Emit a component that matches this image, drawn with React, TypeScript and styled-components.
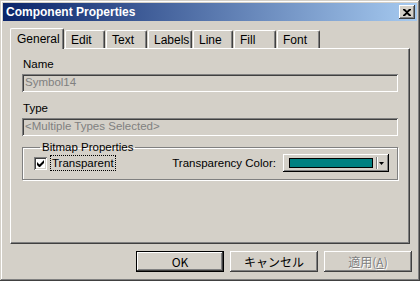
import React from 'react'
import styled, { createGlobalStyle } from 'styled-components'

const FACE = '#d4d0c8'
const SHADOW = '#808080'
const DARK = '#404040'

const GlobalStyle = createGlobalStyle`
    html, body {
        margin: 0;
        padding: 0;
        background: ${FACE};
    }
    body {
        font-family: "Liberation Sans", Arial, "Noto Sans CJK JP", sans-serif;
        font-size: 11.5px;
        color: #000;
    }
`

const Window = styled.div`
    box-sizing: border-box;
    width: 420px;
    height: 281px;
    padding: 3px;
    background: ${FACE};
    display: flex;
    flex-direction: column;
    box-shadow: inset -1px -1px ${DARK}, inset 1px 1px ${FACE},
        inset -2px -2px ${SHADOW}, inset 2px 2px #fff;
`

const TitleBar = styled.div`
    height: 18px;
    display: flex;
    align-items: center;
    justify-content: space-between;
    padding: 0 2px 0 3px;
    background: linear-gradient(to right, #0a246a, #a6caf0);
    color: #fff;
    font-weight: bold;
    font-size: 12px;
`

const CloseButton = styled.div`
    box-sizing: border-box;
    width: 16px;
    height: 14px;
    background: ${FACE};
    display: flex;
    align-items: center;
    justify-content: center;
    box-shadow: inset -1px -1px ${DARK}, inset 1px 1px #fff,
        inset -2px -2px ${SHADOW};
`

const Body = styled.div`
    flex: 1;
    display: flex;
    flex-direction: column;
    padding: 7px 7px 0 7px;
`

const TabRow = styled.div`
    display: flex;
    align-items: flex-end;
    height: 20px;
    position: relative;
    z-index: 1;
`

const Tab = styled.div<{ $active?: boolean; $w: number }>`
    box-sizing: border-box;
    width: ${p => p.$w}px;
    height: ${p => (p.$active ? 21 : 18)}px;
    margin-bottom: ${p => (p.$active ? -1 : 0)}px;
    margin-right: 1px;
    padding-left: ${p => (p.$active ? 6 : 5)}px;
    padding-top: ${p => (p.$active ? 3 : 2)}px;
    background: ${FACE};
    border-top: 1px solid #fff;
    border-left: 1px solid #fff;
    border-right: 1px solid ${DARK};
    border-top-left-radius: 2px;
    border-top-right-radius: 2px;
    box-shadow: inset -1px 0 ${SHADOW};
    font-size: 12px;
`

const Panel = styled.div`
    box-sizing: border-box;
    height: 196px;
    padding: 8px 11px 0 11px;
    display: flex;
    flex-direction: column;
    background: ${FACE};
    border-top: 1px solid #fff;
    border-left: 1px solid #fff;
    border-right: 1px solid ${DARK};
    border-bottom: 1px solid ${DARK};
    box-shadow: inset -1px -1px ${SHADOW};
`

const Label = styled.div`
    height: 14px;
    line-height: 14px;
    padding-left: 1px;
    margin-bottom: 3px;
`

const Field = styled.div`
    box-sizing: border-box;
    height: 18px;
    margin-bottom: 9px;
    padding: 2px 0 0 3px;
    color: ${SHADOW};
    background: ${FACE};
    box-shadow: inset 1px 1px ${SHADOW}, inset -1px -1px #fff,
        inset 2px 2px ${DARK}, inset -2px -2px ${FACE};
`

const Group = styled.fieldset`
    box-sizing: border-box;
    margin: -4px 0 0 0;
    padding: 0 8px 7px 11px;
    border: 1px solid ${SHADOW};
    box-shadow: 1px 1px #fff, inset 1px 1px #fff;
    legend {
        padding: 0 2px;
        margin-left: 6px;
        line-height: 12px;
    }
`

const GroupRow = styled.div`
    display: flex;
    align-items: center;
    height: 18px;
    margin-top: 1px;
`

const CheckBox = styled.div`
    box-sizing: border-box;
    width: 13px;
    height: 13px;
    background: #fff;
    display: flex;
    align-items: center;
    justify-content: center;
    box-shadow: inset 1px 1px ${SHADOW}, inset -1px -1px #fff,
        inset 2px 2px ${DARK}, inset -2px -2px ${FACE};
`

const FocusLabel = styled.span`
    margin-left: 4px;
    padding: 0 1px;
    outline: 1px dotted #000;
    line-height: 14px;
`

const ColorLabel = styled.span`
    margin-left: auto;
    margin-right: 7px;
`

const ColorPicker = styled.div`
    box-sizing: border-box;
    width: 106px;
    height: 18px;
    display: flex;
    align-items: center;
    padding: 0 3px 0 6px;
    background: ${FACE};
    box-shadow: inset -1px -1px #000, inset 1px 1px #fff,
        inset -2px -2px ${SHADOW};
`

const Swatch = styled.div`
    box-sizing: border-box;
    width: 84px;
    height: 10px;
    background: #008080;
    border: 1px solid #000;
`

const DropArrow = styled.div`
    margin-left: 3px;
    height: 12px;
    flex: 1;
    display: flex;
    align-items: center;
    justify-content: center;
    border-left: 1px solid ${SHADOW};
    box-shadow: inset 1px 0 #fff;
`

const ButtonRow = styled.div`
    display: flex;
    justify-content: flex-end;
    gap: 6px;
    margin-top: 7px;
    margin-right: -2px;
`

const Button = styled.div<{ $disabled?: boolean; $default?: boolean }>`
    box-sizing: border-box;
    width: 88px;
    height: 21px;
    display: flex;
    align-items: center;
    justify-content: center;
    background: ${FACE};
    color: ${p => (p.$disabled ? SHADOW : '#000')};
    text-shadow: ${p => (p.$disabled ? '1px 1px #fff' : 'none')};
    box-shadow: ${p =>
        p.$default
            ? `inset -1px -1px #000, inset 1px 1px #000, inset -2px -2px ${DARK}, inset 2px 2px #fff, inset -3px -3px ${SHADOW}`
            : `inset -1px -1px ${DARK}, inset 1px 1px #fff, inset -2px -2px ${SHADOW}`};
    font-family: "Noto Sans CJK JP", "Liberation Sans", sans-serif;
    font-size: 12px;
    u {
        text-decoration: underline;
    }
`

const tabs: [string, number][] = [
    ['General', 54],
    ['Edit', 40],
    ['Text', 41],
    ['Labels', 44],
    ['Line', 40],
    ['Fill', 42],
    ['Font', 43],
]

export default function App() {
    return (
        <>
            <GlobalStyle />
            <Window>
                <TitleBar>
                    <span>Component Properties</span>
                    <CloseButton>
                        <svg width="8" height="7" viewBox="0 0 8 7">
                            <path d="M0 0h2l2 2 2-2h2v1L5 3.5 8 6v1H6L4 5 2 7H0V6l3-2.5L0 1z" fill="#000" />
                        </svg>
                    </CloseButton>
                </TitleBar>
                <Body>
                    <TabRow>
                        {tabs.map(([t, w], i) => (
                            <Tab key={t} $w={w} $active={i === 0}>{t}</Tab>
                        ))}
                    </TabRow>
                    <Panel>
                        <Label>Name</Label>
                        <Field>Symbol14</Field>
                        <Label>Type</Label>
                        <Field>&lt;Multiple Types Selected&gt;</Field>
                        <Group>
                            <legend>Bitmap Properties</legend>
                            <GroupRow>
                                <CheckBox>
                                    <svg width="7" height="7" viewBox="0 0 7 7">
                                        <path d="M0 2v3l2 2h1l4-4V0L2.5 4.5z" fill="#000" />
                                    </svg>
                                </CheckBox>
                                <FocusLabel>Transparent</FocusLabel>
                                <ColorLabel>Transparency Color:</ColorLabel>
                                <ColorPicker>
                                    <Swatch />
                                    <DropArrow>
                                        <svg width="5" height="3" viewBox="0 0 5 3">
                                            <path d="M0 0h5L2.5 3z" fill="#000" />
                                        </svg>
                                    </DropArrow>
                                </ColorPicker>
                            </GroupRow>
                        </Group>
                    </Panel>
                    <ButtonRow>
                        <Button $default>OK</Button>
                        <Button>キャンセル</Button>
                        <Button $disabled>適用(<u>A</u>)</Button>
                    </ButtonRow>
                </Body>
            </Window>
        </>
    )
}
